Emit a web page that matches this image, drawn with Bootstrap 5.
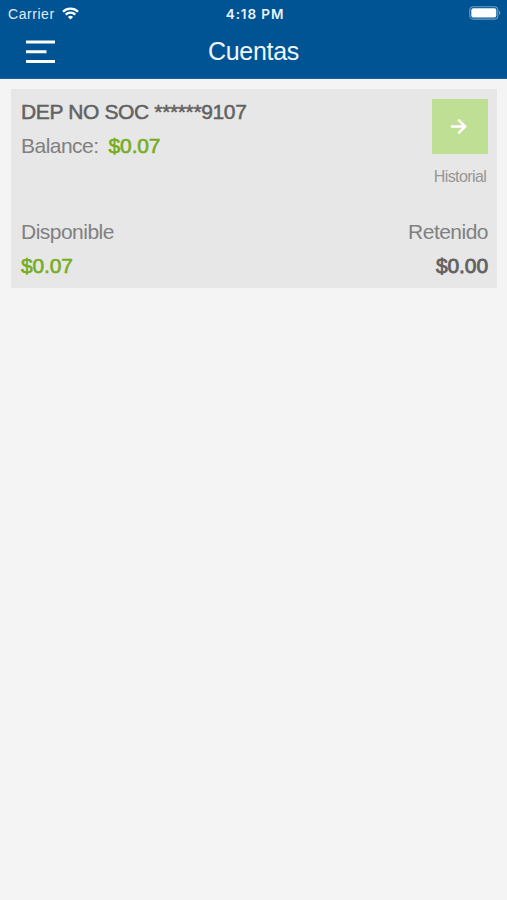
<!DOCTYPE html>
<html lang="es">
<head>
<meta charset="utf-8">
<meta name="viewport" content="width=device-width, initial-scale=1">
<title>Cuentas</title>
<link href="https://cdn.jsdelivr.net/npm/bootstrap@5.3.0/dist/css/bootstrap.min.css" rel="stylesheet">
<style>
body{background:#f4f4f4;font-family:"Liberation Sans",Arial,sans-serif;min-height:100vh;color:#626262}
.app-header{background:#005493;height:79px;color:#fff;border-bottom:1px solid #1763a0}
.status-bar{height:27px;padding:0 6px 0 8px;font-size:14px;line-height:27px}
.status-side{flex:1 1 0}
.carrier{font-size:14px;line-height:20px;padding-top:1px;letter-spacing:.55px;color:#e3edf5}
.clock{font-family:Inter,sans-serif;font-size:13.5px;line-height:20px;padding-top:1px;font-weight:600;letter-spacing:.9px;color:#eaf2f8;margin-right:-1px}
.battery{margin-top:-1px}
.title-bar{height:51px;padding:0 26px}
.title-bar .menu-btn{width:30px;line-height:0}
.menu-btn svg{margin-top:-1px}
.screen-title{font-size:25px;line-height:30px;letter-spacing:-.3px;margin-top:-3px;color:#f0f6fb}
.account{background:#e7e7e7;margin:10px 10px 0 11px;height:199px;padding:10px 9px 0 10px}
.line{font-size:21px;line-height:34px;white-space:nowrap}
.medium{-webkit-text-stroke:.5px currentColor}
.held{-webkit-text-stroke:.8px currentColor;letter-spacing:-.1px}
.thin{color:#808080;letter-spacing:-.52px}
.green{color:#77ad1c;-webkit-text-stroke:.6px currentColor;letter-spacing:-.15px}
.acct-name{line-height:26px;font-size:21px;letter-spacing:-.36px;color:#626262}
.amount{margin-left:10px}
.go{width:56px;height:55px;background:#bfe094}
.history{font-size:16px;line-height:20px;color:#969696;margin-top:13px;letter-spacing:-.6px}
.totals{margin-top:28px}
</style>
<script src="https://cdn.jsdelivr.net/npm/bootstrap@5.3.0/dist/js/bootstrap.bundle.min.js"></script>
</head>
<body>
<header class="app-header">
  <div class="status-bar d-flex align-items-center">
    <div class="status-side d-flex align-items-center">
      <span class="carrier">Carrier</span>
      <svg class="ms-1" width="20" height="13" viewBox="-3 0 20 13" fill="none" stroke="#fff" stroke-width="2.3"><path d="M1 4.7a10.6 10.6 0 0 1 15 0M3.7 7.6a6.8 6.8 0 0 1 9.6 0"/><path d="M8.5 12.6 5.9 10a3.7 3.7 0 0 1 5.2 0Z" fill="#fff" stroke="none"/></svg>
    </div>
    <span class="clock">4:18 PM</span>
    <div class="status-side d-flex justify-content-end align-items-center">
      <svg class="battery" width="32" height="14" viewBox="0 0 32 14"><rect x=".8" y=".7" width="28" height="12.4" rx="3.4" fill="none" stroke="#6f9fc6" stroke-width="1.1"/><rect x="2.3" y="2.2" width="25" height="9.4" rx="1.8" fill="#fff"/><path d="M30.2 4.8c1.6.7 1.6 3.5 0 4.2Z" fill="#7fabcf"/></svg>
    </div>
  </div>
  <div class="title-bar d-flex align-items-center justify-content-between">
    <button class="menu-btn btn border-0 p-0" type="button" aria-label="Menú">
      <svg width="30" height="24" viewBox="0 0 30 24" stroke="#fff" stroke-width="3"><path d="M0 2h29M0 11.700h20.500M0 21.500h29"/></svg>
    </button>
    <h1 class="screen-title mb-0 fw-normal">Cuentas</h1>
    <span class="menu-btn"></span>
  </div>
</header>
<main>
  <section class="account">
    <div class="d-flex justify-content-between">
      <div>
        <div class="acct-name medium text-nowrap">DEP NO SOC ******9107</div>
        <div class="line thin mt-1">Balance:<span class="green amount">$0.07</span></div>
      </div>
      <div class="d-flex flex-column align-items-center">
        <a href="#" class="go d-flex align-items-center justify-content-center" aria-label="Historial">
          <svg width="18" height="18" viewBox="1.500 .5 18 18" fill="none" stroke="#fff" stroke-width="2.5"><path d="M1.500 9H15.500M8.800 2.200 15.600 9l-6.800 6.800"/></svg>
        </a>
        <div class="history">Historial</div>
      </div>
    </div>
    <div class="d-flex justify-content-between totals">
      <div><div class="line thin">Disponible</div><div class="line green">$0.07</div></div>
      <div class="text-end"><div class="line thin">Retenido</div><div class="line held">$0.00</div></div>
    </div>
  </section>
</main>
</body>
</html>
